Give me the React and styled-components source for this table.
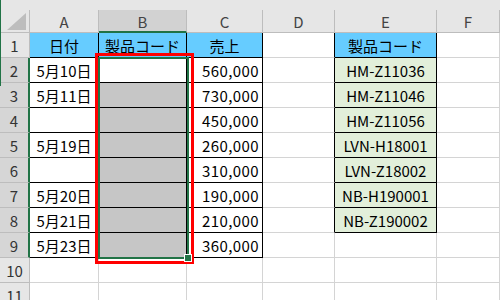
import styled, { createGlobalStyle } from "styled-components";

const GlobalStyle = createGlobalStyle`
  html, body {
    margin: 0;
    padding: 0;
    background: #ffffff;
    overflow: hidden;
  }
  body {
    font-family: "Noto Sans CJK JP", "Noto Sans", sans-serif;
  }
`;

const COLS = ["A", "B", "C", "D", "E", "F"];
const WIDTHS = [30, 69, 88, 76, 72, 102, 63];

const GRID_LINE = "#d4d4d4";
const HEAD_LINE = "#bdbdbd";
const BLACK = "#000000";
const EXCEL_GREEN = "#217346";

const ROWS = [
  ["日付", "製品コード", "売上", "", "製品コード"],
  ["5月10日", "", "560,000", "", "HM-Z11036"],
  ["5月11日", "", "730,000", "", "HM-Z11046"],
  ["", "", "450,000", "", "HM-Z11056"],
  ["5月19日", "", "260,000", "", "LVN-H18001"],
  ["", "", "310,000", "", "LVN-Z18002"],
  ["5月20日", "", "190,000", "", "NB-H190001"],
  ["5月21日", "", "210,000", "", "NB-Z190002"],
  ["5月23日", "", "360,000", "", ""],
  ["", "", "", "", ""],
  ["", "", "", "", ""],
];

const Sheet = styled.div`
  position: relative;
  width: 500px;
  height: 300px;
  overflow: hidden;

  &::before {
    content: "";
    position: absolute;
    left: 0;
    top: 0;
    width: 1px;
    height: 86px;
    background: ${EXCEL_GREEN};
    z-index: 3;
  }
`;

const TopStrip = styled.div`
  height: 10px;
  background: #e6e6e6;
`;

const Grid = styled.div`
  display: grid;
  grid-template-columns: ${WIDTHS.map((w) => `${w}px`).join(" ")};
  grid-template-rows: 23px repeat(${ROWS.length}, 25px);
`;

const Corner = styled.div`
  box-sizing: border-box;
  background: #e6e6e6;
  border-right: 1px solid ${HEAD_LINE};
  border-bottom: 1px solid ${HEAD_LINE};
  display: flex;
  align-items: flex-end;
  justify-content: flex-end;
  padding: 0 3px 2px 0;
`;

const ColHead = styled.div`
  box-sizing: border-box;
  background: ${(p) => (p.$active ? "#d2d2d2" : "#e6e6e6")};
  border-right: 1px solid ${HEAD_LINE};
  border-bottom: ${(p) =>
    p.$active ? `2px solid ${EXCEL_GREEN}` : `1px solid ${HEAD_LINE}`};
  color: #444444;
  font-size: 15px;
  display: flex;
  align-items: center;
  justify-content: center;
  padding-top: ${(p) => (p.$active ? "1px" : "0")};
`;

const RowHead = styled.div`
  box-sizing: border-box;
  background: ${(p) => (p.$active ? "#d6d6d6" : "#e6e6e6")};
  border-right: ${(p) =>
    p.$active ? `2px solid ${EXCEL_GREEN}` : `1px solid ${HEAD_LINE}`};
  border-bottom: 1px solid ${HEAD_LINE};
  color: #333333;
  font-size: 15px;
  display: flex;
  align-items: center;
  justify-content: center;
`;

const Cell = styled.div`
  box-sizing: border-box;
  background: ${(p) => p.$fill || "#ffffff"};
  border-right: 1px solid ${(p) => p.$right || GRID_LINE};
  border-bottom: 1px solid ${(p) => p.$bottom || GRID_LINE};
  color: #000000;
  font-size: 15px;
  letter-spacing: ${(p) => (p.$numeric ? "0.4px" : "0")};
  white-space: nowrap;
  display: flex;
  align-items: center;
  justify-content: ${(p) => p.$align || "flex-start"};
  padding: 1px 3px 0 3px;
`;

const Selection = styled.div`
  position: absolute;
  left: 98px;
  top: 57px;
  width: 91px;
  height: 202px;
  box-sizing: border-box;
  border: 2px solid ${EXCEL_GREEN};
  pointer-events: none;
  z-index: 2;
`;

const FillHandle = styled.div`
  position: absolute;
  right: -5px;
  bottom: -5px;
  width: 6px;
  height: 6px;
  background: ${EXCEL_GREEN};
  border: 1px solid #ffffff;
`;

const Marker = styled.div`
  position: absolute;
  left: 95px;
  top: 53px;
  width: 99px;
  height: 211px;
  box-sizing: border-box;
  border: 3px solid #ff0000;
  pointer-events: none;
  z-index: 1;
`;

const inTable = (r, c) => r >= 1 && r <= 9 && c <= 2;
const inCodes = (r, c) => r >= 1 && r <= 8 && c === 4;

function cellProps(r, c) {
  const props = {};
  if (inTable(r, c) || inCodes(r, c)) {
    props.$right = BLACK;
    props.$bottom = BLACK;
  }
  if (c === 3 && r >= 1 && r <= 8) props.$right = BLACK;

  if (r === 1 && (c <= 2 || c === 4)) props.$fill = "#66ccff";
  else if (inCodes(r, c)) props.$fill = "#e2efda";
  else if (c === 1 && r >= 3 && r <= 9) props.$fill = "#c6c6c6";

  if (c === 2 && r >= 2) {
    props.$align = "flex-end";
    props.$numeric = true;
  } else {
    props.$align = "center";
  }
  return props;
}

export default function App() {
  return (
    <>
      <GlobalStyle />
      <Sheet>
        <TopStrip />
        <Grid>
          <Corner>
            <svg width="19" height="17" viewBox="0 0 19 17">
              <polygon points="19,0 19,17 0,17" fill="#bdbdbd" />
            </svg>
          </Corner>
          {COLS.map((col) => (
            <ColHead key={col} $active={col === "B"}>
              {col}
            </ColHead>
          ))}
          {ROWS.map((row, i) => {
            const r = i + 1;
            return [
              <RowHead key={`h${r}`} $active={r >= 2 && r <= 9}>
                {r}
              </RowHead>,
              ...COLS.map((col, c) => (
                <Cell key={`${col}${r}`} {...cellProps(r, c)}>
                  {row[c] || ""}
                </Cell>
              )),
            ];
          })}
        </Grid>
        <Marker />
        <Selection>
          <FillHandle />
        </Selection>
      </Sheet>
    </>
  );
}
